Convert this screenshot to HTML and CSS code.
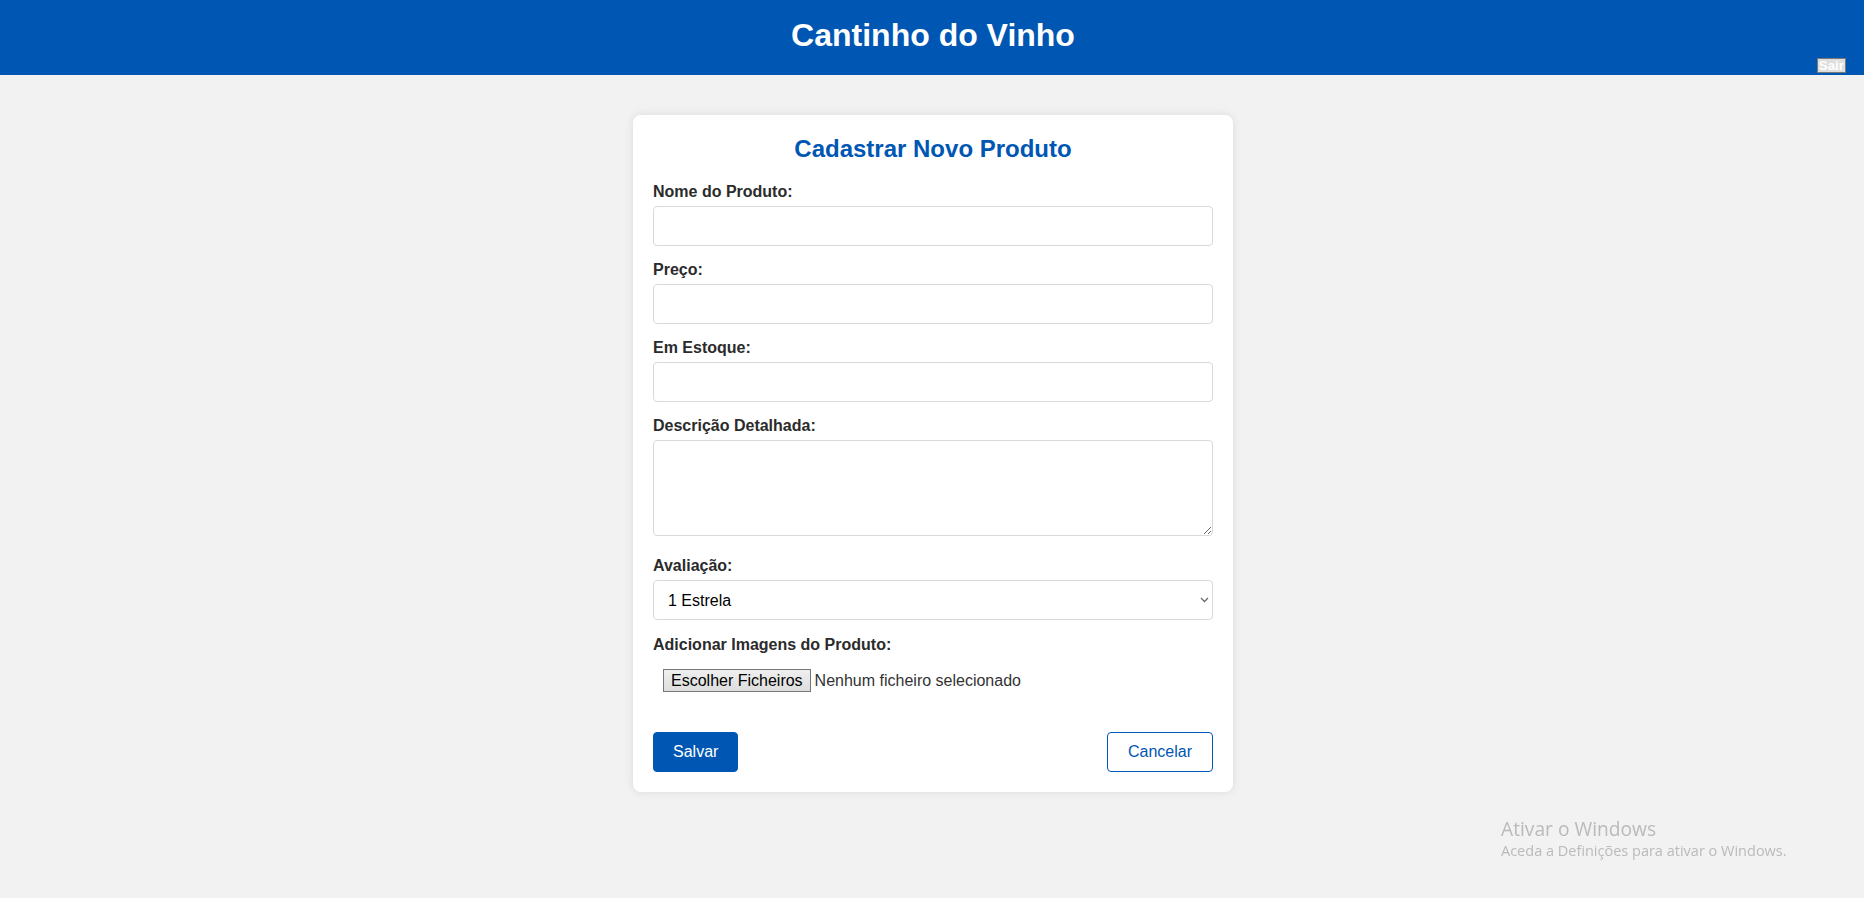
FILE: index.html
```html
<!DOCTYPE html>
<html lang="pt">
<head>
<meta charset="utf-8">
<title>Cantinho do Vinho - Cadastrar Produto</title>
<link rel="stylesheet" href="styles.css">
</head>
<body>
<header class="site-header">
  <h1 class="site-title">Cantinho do Vinho</h1>
  <button class="logout-btn" type="button">Sair</button>
</header>
<main class="page">
  <div class="card">
    <h2 class="card-title">Cadastrar Novo Produto</h2>
    <form class="product-form">
      <div class="form-group">
        <label class="form-label">Nome do Produto:</label>
        <input class="field" type="text">
      </div>
      <div class="form-group">
        <label class="form-label">Preço:</label>
        <input class="field" type="text">
      </div>
      <div class="form-group">
        <label class="form-label">Em Estoque:</label>
        <input class="field" type="text">
      </div>
      <div class="form-group form-group-area">
        <label class="form-label">Descrição Detalhada:</label>
        <textarea class="field field-area" rows="4"></textarea>
      </div>
      <div class="form-group form-group-select">
        <label class="form-label">Avaliação:</label>
        <div class="select-wrap">
          <select class="field field-select">
            <option>1 Estrela</option>
            <option>2 Estrelas</option>
            <option>3 Estrelas</option>
            <option>4 Estrelas</option>
            <option>5 Estrelas</option>
          </select>
          <svg class="select-arrow" width="9" height="6" viewBox="0 0 9 6"><path d="M1 1 L4.5 4.5 L8 1" fill="none" stroke="#6b6b6b" stroke-width="1.3"/></svg>
        </div>
      </div>
      <div class="form-group form-group-file">
        <label class="form-label">Adicionar Imagens do Produto:</label>
        <div class="file-input">
          <span class="file-btn">Escolher Ficheiros</span><span class="file-text">Nenhum ficheiro selecionado</span>
        </div>
      </div>
      <div class="actions">
        <button class="btn btn-primary" type="button">Salvar</button>
        <button class="btn btn-outline" type="button">Cancelar</button>
      </div>
    </form>
  </div>
</main>
<div class="watermark">
  <div class="wm-title">Ativar o Windows</div>
  <div class="wm-sub">Aceda a Definições para ativar o Windows.</div>
</div>
</body>
</html>
```

FILE: styles.css
```css
html, body {
  margin: 0;
  padding: 0;
}

body {
  background: #f2f2f2;
  font-family: "Liberation Sans", Arial, sans-serif;
  color: #333;
  min-height: 898px;
}

.site-header {
  position: relative;
  background: #0056b3;
  color: #fff;
  padding: 17px 0 21px 2px;
  text-align: center;
}

.site-title {
  margin: 0;
  font-size: 32px;
  font-weight: bold;
  line-height: normal;
}

.logout-btn {
  position: absolute;
  right: 18px;
  bottom: 2px;
  height: 15px;
  padding: 0 1px;
  margin: 0;
  font-family: "Liberation Sans", Arial, sans-serif;
  font-size: 13.33px;
  font-weight: bold;
  line-height: 13px;
  color: #fff;
  background: #dedede;
  border: 1px solid #7a7a7a;
  border-radius: 0;
}

.page {
  padding-top: 40px;
  padding-left: 2px;
}

.card {
  box-sizing: border-box;
  width: 600px;
  margin: 0 auto;
  background: #fff;
  padding: 20px;
  border-radius: 8px;
  box-shadow: 0 0 10px rgba(0, 0, 0, 0.1);
}

.card-title {
  margin: 0 0 20px;
  text-align: center;
  color: #0056b3;
  font-size: 24px;
  line-height: normal;
}

.form-group {
  margin-bottom: 15px;
}

.form-group-area {
  margin-bottom: 21px;
}

.form-group-select {
  margin-bottom: 16px;
}

.form-label {
  display: block;
  font-weight: bold;
  font-size: 16px;
  line-height: normal;
  margin-bottom: 5px;
  color: #2b2b2b;
}

.field {
  display: block;
  box-sizing: border-box;
  width: 100%;
  padding: 10px;
  font-family: "Liberation Sans", Arial, sans-serif;
  font-size: 16px;
  line-height: normal;
  color: #000;
  background: #fff;
  border: 1px solid #d9d9d9;
  border-radius: 4px;
  margin: 0;
}

.field-area {
  resize: vertical;
  height: 96px;
}

.select-wrap {
  position: relative;
}

.field-select {
  -webkit-appearance: none;
  appearance: none;
  height: 40px;
  padding: 0 10px 0 14px;
}

.select-arrow {
  position: absolute;
  right: 4px;
  top: 17px;
}

.form-group-file {
  margin-bottom: 0;
}

.file-input {
  display: flex;
  align-items: center;
  padding: 10px;
  font-size: 16px;
  color: #333;
}

.file-btn {
  display: inline-block;
  box-sizing: border-box;
  height: 23px;
  padding: 1px 7px 0;
  line-height: 20px;
  color: #000;
  background: linear-gradient(#efefef, #dddddd);
  border: 1px solid #767676;
  margin-right: 4px;
}

.file-text {
  color: #333;
}

.actions {
  display: flex;
  justify-content: space-between;
  margin-top: 30px;
}

.btn {
  font-family: "Liberation Sans", Arial, sans-serif;
  font-size: 16px;
  line-height: normal;
  padding: 10px 19px;
  border-radius: 4px;
  border: 1px solid #0056b3;
  cursor: pointer;
  margin: 0;
}

.btn-primary {
  background: #0056b3;
  color: #fff;
}

.btn-outline {
  background: #fff;
  color: #0056b3;
  padding: 10px 20px;
}

.watermark {
  position: fixed;
  left: 1501px;
  top: 816px;
  color: #bababa;
  font-family: "Open Sans", "Noto Sans", sans-serif;
  pointer-events: none;
}

.wm-title {
  font-size: 19.2px;
  line-height: 25px;
}

.wm-sub {
  font-size: 14.5px;
  line-height: 19px;
}
```
